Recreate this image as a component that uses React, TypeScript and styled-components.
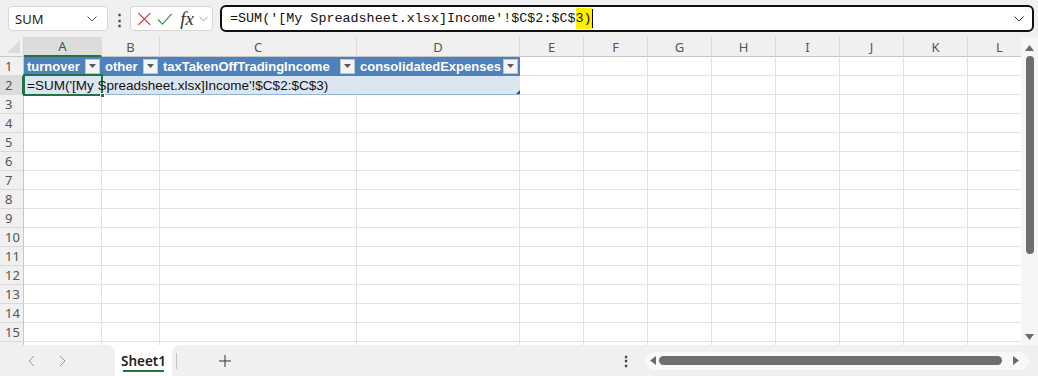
import React from "react";
import styled, { createGlobalStyle } from "styled-components";

const GlobalStyle = createGlobalStyle`
  html, body {
    margin: 0;
    padding: 0;
    background: #f0f0f0;
  }
  * {
    box-sizing: border-box;
  }
`;

const FORMULA = "=SUM('[My Spreadsheet.xlsx]Income'!$C$2:$C$";
const COLUMNS = [
  { key: "A", width: 78 },
  { key: "B", width: 58 },
  { key: "C", width: 197 },
  { key: "D", width: 163 },
  { key: "E", width: 64 },
  { key: "F", width: 64 },
  { key: "G", width: 64 },
  { key: "H", width: 64 },
  { key: "I", width: 64 },
  { key: "J", width: 64 },
  { key: "K", width: 64 },
  { key: "L", width: 64 },
];
const HEADERS = ["turnover", "other", "taxTakenOffTradingIncome", "consolidatedExpenses"];
// 15 full rows plus the sliver of row 16 peeking under the tab bar
const ROWS = Array.from({ length: 16 }, (_, i) => i + 1);
const VISIBLE_ROWS = 15;

const ChevronDown: React.FC<{ color?: string }> = ({ color = "#555" }) => (
  <svg width="10" height="6" viewBox="0 0 10 6" fill="none">
    <path d="M0.5 0.5 L5 5 L9.5 0.5" stroke={color} strokeWidth="1" />
  </svg>
);

const App: React.FC = () => {
  return (
    <>
      <GlobalStyle />
      <Page>
        <Toolbar>
          <NameBox>
            <span>SUM</span>
            <ChevronDown />
          </NameBox>
          <MoreDots>⋮</MoreDots>
          <FxGroup>
            <svg width="16" height="16" viewBox="0 0 16 16" fill="none">
              <path d="M1.5 1.5 L14.5 14.5 M14.5 1.5 L1.5 14.5" stroke="#d13438" strokeWidth="1.3" />
            </svg>
            <svg width="17" height="14" viewBox="0 0 17 14" fill="none">
              <path d="M1 7.5 L6 12.5 L16 1.5" stroke="#3a9a4c" strokeWidth="1.3" />
            </svg>
            <FxLabel>fx</FxLabel>
            <ChevronDown color="#999" />
          </FxGroup>
          <FormulaBox>
            <FormulaText>
              {FORMULA}
              <Highlight>3)</Highlight>
              <Caret />
            </FormulaText>
            <ChevronDown color="#333" />
          </FormulaBox>
        </Toolbar>

        <SheetArea>
          <Grid>
            <HeaderRow>
              <CornerCell>
                <CornerTriangle />
              </CornerCell>
              {COLUMNS.map((c) => (
                <ColHeader key={c.key} $w={c.width} $active={c.key === "A"}>
                  {c.key}
                </ColHeader>
              ))}
            </HeaderRow>
            {ROWS.map((r) => (
              <Row key={r}>
                <RowHeader $active={r === 2}>{r <= VISIBLE_ROWS ? r : ""}</RowHeader>
                {COLUMNS.map((c, ci) => {
                  const inTable = ci < 4 && r <= 2;
                  if (inTable && r === 1) {
                    return (
                      <TableHeadCell key={c.key} $w={c.width}>
                        <span>{HEADERS[ci]}</span>
                        <FilterButton>
                          <svg width="7" height="4" viewBox="0 0 7 4">
                            <path d="M0 0 H7 L3.5 4 Z" fill="#595959" />
                          </svg>
                        </FilterButton>
                      </TableHeadCell>
                    );
                  }
                  if (inTable && r === 2) {
                    return (
                      <TableBodyCell key={c.key} $w={c.width}>
                        {ci === 0 && <OverflowText>{FORMULA}3)</OverflowText>}
                        {ci === 0 && (
                          <ActiveCell>
                            <FillHandle />
                          </ActiveCell>
                        )}
                        {ci === 3 && <ResizeMark />}
                      </TableBodyCell>
                    );
                  }
                  return <Cell key={c.key} $w={c.width} />;
                })}
              </Row>
            ))}
          </Grid>
          <VScroll>
            <ArrowBtn>
              <svg width="9" height="6" viewBox="0 0 9 6">
                <path d="M0 6 L4.5 0 L9 6 Z" fill="#6a6a6a" />
              </svg>
            </ArrowBtn>
            <VTrack>
              <VThumb />
            </VTrack>
            <ArrowBtn>
              <svg width="9" height="6" viewBox="0 0 9 6">
                <path d="M0 0 L9 0 L4.5 6 Z" fill="#6a6a6a" />
              </svg>
            </ArrowBtn>
          </VScroll>
        </SheetArea>

        <BottomBar>
          <NavPanel>
            <NavArrow>
              <svg width="7" height="12" viewBox="0 0 7 12" fill="none">
                <path d="M6 1 L1 6 L6 11" stroke="#9a9a9a" strokeWidth="1" />
              </svg>
            </NavArrow>
            <NavArrow>
              <svg width="7" height="12" viewBox="0 0 7 12" fill="none">
                <path d="M1 1 L6 6 L1 11" stroke="#9a9a9a" strokeWidth="1" />
              </svg>
            </NavArrow>
          </NavPanel>
          <SheetTab>Sheet1</SheetTab>
          <RestPanel>
            <TabDivider />
            <AddSheet>
              <svg width="12" height="12" viewBox="0 0 12 12" fill="none">
                <path d="M6 0 V12 M0 6 H12" stroke="#333" strokeWidth="1" />
              </svg>
            </AddSheet>
            <Spacer />
            <MoreDotsSmall>⋮</MoreDotsSmall>
            <HScroll>
              <svg width="6" height="9" viewBox="0 0 6 9">
                <path d="M6 0 V9 L0 4.5 Z" fill="#6a6a6a" />
              </svg>
              <HThumb />
              <svg width="6" height="9" viewBox="0 0 6 9">
                <path d="M0 0 V9 L6 4.5 Z" fill="#6a6a6a" />
              </svg>
            </HScroll>
          </RestPanel>
        </BottomBar>
      </Page>
    </>
  );
};

const Page = styled.div`
  width: 1038px;
  height: 376px;
  display: flex;
  flex-direction: column;
  background: #f0f0f0;
  font-family: "Noto Sans", "Open Sans", sans-serif;
  overflow: hidden;
`;

const Toolbar = styled.div`
  height: 37px;
  display: flex;
  align-items: center;
  padding: 0 4px 0 8px;
  flex-shrink: 0;
`;

const NameBox = styled.div`
  width: 100px;
  height: 25px;
  background: #fff;
  border: 1px solid #d6d6d6;
  border-radius: 4px;
  display: flex;
  align-items: center;
  justify-content: space-between;
  padding: 0 10px 0 6px;
  font-size: 13px;
  color: #222;
`;

const MoreDots = styled.div`
  width: 22px;
  text-align: center;
  font-size: 15px;
  font-weight: bold;
  color: #444;
`;

const FxGroup = styled.div`
  width: 83px;
  height: 25px;
  background: #fff;
  border: 1px solid #d6d6d6;
  border-radius: 4px;
  display: flex;
  align-items: center;
  gap: 5px;
  padding: 0 4px 0 6px;
`;

const FxLabel = styled.span`
  font-family: "Liberation Serif", "DejaVu Serif", serif;
  font-style: italic;
  font-size: 19px;
  color: #333;
  margin-left: 3px;
  line-height: 1;
`;

const FormulaBox = styled.div`
  margin-left: 7px;
  flex: 1;
  height: 27px;
  background: #fff;
  border: 2px solid #111;
  border-radius: 6px;
  display: flex;
  align-items: center;
  justify-content: space-between;
  padding: 0 8px 0 8px;
`;

const FormulaText = styled.div`
  font-family: "Liberation Mono", "DejaVu Sans Mono", monospace;
  font-size: 13.4px;
  color: #111;
  display: flex;
  align-items: center;
  white-space: pre;
`;

const Highlight = styled.span`
  background: #ffef00;
  line-height: 21px;
`;

const Caret = styled.span`
  width: 1px;
  height: 19px;
  background: #000;
`;

const SheetArea = styled.div`
  height: 308px;
  display: flex;
  flex-shrink: 0;
  background: #fff;
`;

const Grid = styled.div`
  flex: 1;
  overflow: hidden;
  display: flex;
  flex-direction: column;
  font-family: "Noto Sans", "Open Sans", sans-serif;
`;

const HeaderRow = styled.div`
  display: flex;
  height: 20px;
  flex-shrink: 0;
  background: #f0f0f0;
`;

const CornerCell = styled.div`
  width: 24px;
  flex-shrink: 0;
  border-right: 1px solid #d4d4d4;
  border-bottom: 1px solid #c8c8c8;
  position: relative;
`;

const CornerTriangle = styled.div`
  position: absolute;
  right: 3px;
  bottom: 3px;
  width: 0;
  height: 0;
  border-left: 13px solid transparent;
  border-bottom: 13px solid #dcdcdc;
`;

const ColHeader = styled.div<{ $w: number; $active?: boolean }>`
  width: ${(p) => p.$w}px;
  flex-shrink: 0;
  display: flex;
  align-items: center;
  justify-content: center;
  font-size: 13px;
  color: ${(p) => (p.$active ? "#1e6b41" : "#555")};
  background: ${(p) => (p.$active ? "#dcdcdc" : "transparent")};
  border-right: 1px solid #dadada;
  border-bottom: ${(p) => (p.$active ? "2px solid #217346" : "1px solid #c8c8c8")};
`;

const Row = styled.div`
  display: flex;
  height: 19px;
  flex-shrink: 0;
`;

const RowHeader = styled.div<{ $active?: boolean }>`
  width: 24px;
  flex-shrink: 0;
  background: ${(p) => (p.$active ? "#dcdcdc" : "#f0f0f0")};
  color: ${(p) => (p.$active ? "#1e6b41" : "#555")};
  border-right: ${(p) => (p.$active ? "2px solid #217346" : "1px solid #c8c8c8")};
  border-bottom: 1px solid #dadada;
  font-size: 13px;
  display: flex;
  align-items: center;
  padding-left: 5px;
`;

const Cell = styled.div<{ $w: number }>`
  width: ${(p) => p.$w}px;
  flex-shrink: 0;
  border-right: 1px solid #e1e1e1;
  border-bottom: 1px solid #e1e1e1;
`;

const TableHeadCell = styled.div<{ $w: number }>`
  width: ${(p) => p.$w}px;
  flex-shrink: 0;
  background: #4f81bd;
  color: #fff;
  font-family: "Liberation Sans", Arial, sans-serif;
  font-weight: bold;
  font-size: 13px;
  display: flex;
  align-items: center;
  justify-content: space-between;
  padding: 0 2px 0 3px;
  border-bottom: 1px solid #4f81bd;
`;

const FilterButton = styled.div`
  width: 15px;
  height: 15px;
  background: #f4f4f4;
  border: 1px solid #c6c6c6;
  display: flex;
  align-items: center;
  justify-content: center;
`;

const TableBodyCell = styled.div<{ $w: number }>`
  width: ${(p) => p.$w}px;
  flex-shrink: 0;
  background: #dce6f1;
  border-bottom: 1px solid #95b3d7;
  position: relative;
`;

const OverflowText = styled.div`
  position: absolute;
  left: 3px;
  top: 0;
  height: 18px;
  display: flex;
  align-items: center;
  white-space: nowrap;
  font-family: "Liberation Sans", Arial, sans-serif;
  font-size: 13.5px;
  color: #111;
  z-index: 2;
`;

const ActiveCell = styled.div`
  position: absolute;
  left: -1px;
  top: -2px;
  right: -1px;
  bottom: -2px;
  border: 2px solid #217346;
  z-index: 1;
`;

const FillHandle = styled.div`
  position: absolute;
  right: -4px;
  bottom: -4px;
  width: 5px;
  height: 5px;
  background: #217346;
  border: 1px solid #fff;
`;

const ResizeMark = styled.div`
  position: absolute;
  right: 0;
  bottom: 0;
  width: 0;
  height: 0;
  border-left: 4px solid transparent;
  border-bottom: 4px solid #2f4f8f;
`;

const VScroll = styled.div`
  width: 17px;
  flex-shrink: 0;
  background: #f6f6f6;
  display: flex;
  flex-direction: column;
  align-items: center;
  padding: 5px 0 2px;
`;

const ArrowBtn = styled.div`
  height: 12px;
  display: flex;
  align-items: center;
  justify-content: center;
`;

const VTrack = styled.div`
  flex: 1;
  width: 100%;
  display: flex;
  justify-content: center;
  padding-top: 2px;
`;

const VThumb = styled.div`
  width: 8px;
  height: 198px;
  background: #6e6e6e;
  border-radius: 4px;
`;

const BottomBar = styled.div`
  flex: 1;
  display: flex;
  background: #fff;
`;

const NavPanel = styled.div`
  width: 115px;
  background: #f0f0f0;
  border-top-right-radius: 8px;
  display: flex;
  align-items: center;
  padding-left: 28px;
  gap: 24px;
`;

const NavArrow = styled.div`
  width: 7px;
  display: flex;
  align-items: center;
`;

const SheetTab = styled.div`
  width: 57px;
  background: #fff;
  display: flex;
  align-items: center;
  justify-content: center;
  font-size: 13.5px;
  font-weight: 600;
  color: #222;
  position: relative;
  padding-top: 1px;

  &::after {
    content: "";
    position: absolute;
    left: 8px;
    right: 8px;
    bottom: 4px;
    height: 2px;
    background: #217346;
  }
`;

const RestPanel = styled.div`
  flex: 1;
  background: #f0f0f0;
  border-top-left-radius: 8px;
  display: flex;
  align-items: center;
`;

const TabDivider = styled.div`
  width: 1px;
  height: 16px;
  background: #c4c4c4;
  margin-left: 4px;
`;

const AddSheet = styled.div`
  margin-left: 42px;
  display: flex;
  align-items: center;
`;

const Spacer = styled.div`
  flex: 1;
`;

const MoreDotsSmall = styled.div`
  font-size: 14px;
  font-weight: bold;
  color: #333;
  margin-right: 12px;
`;

const HScroll = styled.div`
  width: 384px;
  height: 18px;
  margin-right: 9px;
  background: #f8f8f8;
  border-radius: 9px;
  display: flex;
  align-items: center;
  gap: 3px;
  padding: 0 10px 0 5px;
`;

const HThumb = styled.div`
  flex: 1;
  height: 9px;
  background: #6e6e6e;
  border-radius: 5px;
  margin-right: 8px;
`;

export default App;
